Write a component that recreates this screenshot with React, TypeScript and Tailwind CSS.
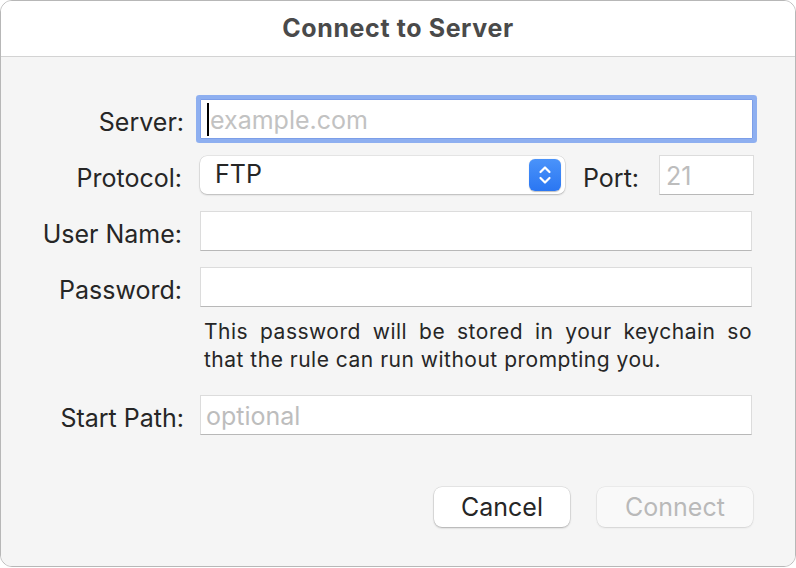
import React from 'react'

const font = { fontFamily: 'Inter, "Noto Sans", "Liberation Sans", sans-serif' }

function Label({ children, className = '' }: { children: React.ReactNode; className?: string }) {
  return (
    <div className={'w-[183px] shrink-0 pt-[6px] text-right text-[25px] leading-none text-[#262626] ' + className}>
      {children}
    </div>
  )
}

function TextField({ placeholder, className = '' }: { placeholder?: string; className?: string }) {
  return (
    <div
      className={
        'flex h-[40px] items-center border border-[#dcdcdc] border-b-[#b8b8b8] bg-white pl-[5px] pt-[3px] text-[25px] leading-none text-[#bdbdbd] ' +
        className
      }
    >
      {placeholder}
    </div>
  )
}

function Stepper() {
  return (
    <div className="flex h-[32px] w-[32px] items-center justify-center rounded-[6px] bg-gradient-to-b from-[#4a93fa] to-[#2a76f2] shadow-[0_0.5px_1px_rgba(0,0,0,0.25)]">
      <svg width="16" height="22" viewBox="0 0 16 22" fill="none" stroke="white" strokeWidth="2.2" strokeLinecap="round" strokeLinejoin="round">
        <path d="M3.5 8 L8 3.5 L12.5 8" />
        <path d="M3.5 14 L8 18.5 L12.5 14" />
      </svg>
    </div>
  )
}

export default function App() {
  return (
    <div className="h-[568px] w-[796px] bg-white" style={font}>
      <div className="flex h-[567px] w-[796px] flex-col overflow-hidden rounded-[12px] border border-[#b7b7b7]">
        {/* Title bar */}
        <div className="flex h-[56px] shrink-0 items-center justify-center border-b border-[#d3d3d3] bg-white">
          <h1 className="text-[25px] font-bold tracking-[0.6px] text-[#4a4a4a]">Connect to Server</h1>
        </div>

        {/* Body */}
        <div className="flex flex-1 flex-col bg-[#f5f5f5]">
          {/* Server */}
          <div className="mt-[42px] flex items-center gap-[16px]">
            <Label>Server:</Label>
            <div className="flex h-[40px] w-[553px] items-center rounded-[1px] border border-[#7c9ee8] bg-white pl-[6px] pt-[3px] text-[25px] leading-none text-[#c2c2c2] shadow-[0_0_0_4px_#8eaff0]">
              <span className="mb-[3px] mr-[1px] h-[33px] w-[2px] bg-black" />
              example.com
            </div>
          </div>

          {/* Protocol */}
          <div className="mt-[16px] flex items-center">
            <Label className="pr-[2px]">Protocol:</Label>
            <div className="ml-[16px] flex h-[38px] w-[365px] items-center justify-between rounded-[7px] bg-white pl-[15px] pr-[4px] shadow-[0_0_0_0.5px_rgba(0,0,0,0.12),0_1px_2px_rgba(0,0,0,0.2)]">
              <span className="text-[25px] text-[#262626]">FTP</span>
              <Stepper />
            </div>
            <span className="ml-[18px] pt-[6px] text-[25px] leading-none text-[#262626]">Port:</span>
            <TextField placeholder="21" className="ml-[20px] w-[95px] pl-[6px]" />
          </div>

          {/* User Name */}
          <div className="mt-[16px] flex items-center gap-[16px]">
            <Label className="pr-[2px]">User Name:</Label>
            <TextField className="w-[552px]" />
          </div>

          {/* Password */}
          <div className="mt-[16px] flex items-center gap-[16px]">
            <Label className="pr-[2px]">Password:</Label>
            <TextField className="w-[552px]" />
          </div>

          <p className="ml-[203px] mt-[11px] w-[548px] text-justify text-[21px] leading-[28px] tracking-[0.5px] text-[#262626] [text-align-last:left]">
            This password will be stored in your keychain so that the rule can run without prompting you.
          </p>

          {/* Start Path */}
          <div className="mt-[21px] flex items-center gap-[16px]">
            <Label>Start Path:</Label>
            <TextField placeholder="optional" className="w-[552px]" />
          </div>

          {/* Buttons */}
          <div className="mt-[52px] flex justify-end gap-[27px] pr-[42px]">
            <button className="flex h-[40px] w-[136px] items-center justify-center rounded-[8px] bg-white pt-[2px] text-[25px] text-[#262626] shadow-[0_0_0_0.5px_rgba(0,0,0,0.12),0_1px_2px_rgba(0,0,0,0.25)]">
              Cancel
            </button>
            <button className="flex h-[40px] w-[156px] items-center justify-center rounded-[8px] bg-[#f9f9f9] pt-[2px] text-[25px] text-[#b9b9b9] shadow-[0_0_0_0.5px_rgba(0,0,0,0.08),0_1px_2px_rgba(0,0,0,0.1)]">
              Connect
            </button>
          </div>
        </div>
      </div>
    </div>
  )
}
